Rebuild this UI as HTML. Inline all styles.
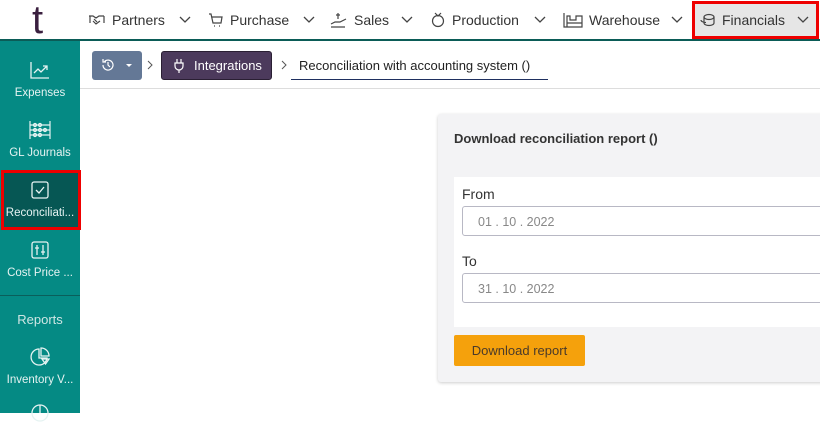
<!DOCTYPE html>
<html><head><style>
*{box-sizing:border-box;margin:0;padding:0}
body{width:820px;height:413px;overflow:hidden;font-family:"Liberation Sans",sans-serif;background:#fff;position:relative;color:#222}
.top{position:absolute;left:0;top:0;width:820px;height:41px;background:#fff;border-bottom:2px solid #0b5c57}
.logo{position:absolute;left:32px;top:2px;font-size:40px;color:#3a1f3f;font-family:"Liberation Sans",sans-serif;line-height:36px}
.nav{position:absolute;top:0;height:39px;display:flex;align-items:center;font-size:14px;color:#333}
.nav svg{margin-right:6px}
.chev{position:absolute;top:12px}
.fin{position:absolute;left:692px;top:1px;width:127px;height:38px;background:#e6e6e6;border:3px solid #e00}
.side{position:absolute;left:0;top:41px;width:80px;height:372px;background:#058a84}
.si{position:absolute;left:0;width:80px;text-align:center;color:#e6f3f2;font-size:11.5px}
.sel{position:absolute;left:1px;top:170px;width:80px;height:60px;background:#065754;border:3px solid #e00}
.crumbs{position:absolute;left:80px;top:41px;width:740px;height:48px;border-bottom:1px solid #ddd}
.card{position:absolute;left:438px;top:114px;width:390px;height:268px;background:#f3f3f5;box-shadow:0 1px 3px rgba(0,0,0,.2);border-radius:3px}
.inner{position:absolute;left:16px;top:63px;width:380px;height:150px;background:#fff}
.lbl{position:absolute;left:8px;font-size:14px;color:#333}
.inp{position:absolute;left:8px;width:380px;height:30px;border:1px solid #b8b8c4;border-radius:3px;font-size:12.5px;color:#888;padding:8px 15px}
.btn{position:absolute;left:16px;top:221px;width:131px;height:31px;background:#f5a10c;border-radius:2px;font-size:13px;color:#4a3a2a;text-align:center;line-height:31px}
</style></head><body>
<div class="top">
<div class="logo">t</div>
<div class="nav" style="left:88px"><svg width="18" height="14" viewBox="0 0 18 14" fill="none" stroke="#444" stroke-width="1.2"><path d="M1 3h4l3 2 3-2h5M2 3v7M16 3v7M5 8l3 3 4-3M6 6l3 3"/></svg>Partners</div>
<svg class="chev" style="left:178px" width="14" height="14" viewBox="0 0 14 14"><path d="M2 5l5 5 5-5" fill="none" stroke="#444" stroke-width="1.3"/></svg>
<div class="nav" style="left:208px"><svg width="16" height="16" viewBox="0 0 16 16" fill="none" stroke="#444" stroke-width="1.2"><path d="M1 2h2l2 9h8l1-6H4M6 14h1M11 14h1"/></svg>Purchase</div>
<svg class="chev" style="left:302px" width="14" height="14" viewBox="0 0 14 14"><path d="M2 5l5 5 5-5" fill="none" stroke="#444" stroke-width="1.3"/></svg>
<div class="nav" style="left:330px"><svg width="18" height="16" viewBox="0 0 18 16" fill="none" stroke="#444" stroke-width="1.2"><path d="M8 1v6M6 3h4M1 12l4-2h5l6-3M1 15h14"/></svg>Sales</div>
<svg class="chev" style="left:400px" width="14" height="14" viewBox="0 0 14 14"><path d="M2 5l5 5 5-5" fill="none" stroke="#444" stroke-width="1.3"/></svg>
<div class="nav" style="left:430px"><svg width="16" height="16" viewBox="0 0 16 16" fill="none" stroke="#444" stroke-width="1.2"><circle cx="8" cy="9" r="5.5"/><path d="M5 1l3 3 3-3"/></svg>Production</div>
<svg class="chev" style="left:533px" width="14" height="14" viewBox="0 0 14 14"><path d="M2 5l5 5 5-5" fill="none" stroke="#444" stroke-width="1.3"/></svg>
<div class="nav" style="left:563px"><svg width="20" height="16" viewBox="0 0 20 16" fill="none" stroke="#444" stroke-width="1.2"><path d="M1 1v14h18V4h-6v4H7V4H4v11M4 11h15"/></svg>Warehouse</div>
<svg class="chev" style="left:670px" width="14" height="14" viewBox="0 0 14 14"><path d="M2 5l5 5 5-5" fill="none" stroke="#444" stroke-width="1.3"/></svg>
<div class="fin"></div>
<div class="nav" style="left:700px"><svg width="16" height="14" viewBox="0 0 16 14" fill="none" stroke="#444" stroke-width="1.2"><ellipse cx="9" cy="4" rx="5" ry="2.5"/><path d="M4 4v6c0 1.4 2.2 2.5 5 2.5s5-1.1 5-2.5V4M1 7c0 1.4 2.2 2.5 5 2.5"/></svg>Financials</div>
<svg class="chev" style="left:796px" width="14" height="14" viewBox="0 0 14 14"><path d="M2 5l5 5 5-5" fill="none" stroke="#444" stroke-width="1.3"/></svg>
</div>
<div class="side">
<div class="si" style="top:20px"><svg width="20" height="18" viewBox="0 0 20 18" fill="none" stroke="#e6f3f2" stroke-width="1.3"><path d="M1 1v16h18M4 12l4-4 3 3 6-6M13 5h4v4"/></svg><div style="margin-top:5px">Expenses</div></div>
<div class="si" style="top:80px"><svg width="22" height="18" viewBox="0 0 22 18" fill="none" stroke="#e6f3f2" stroke-width="1.2"><path d="M1 0v18M21 0v18M1 4h20M1 9h20M1 14h20"/><circle cx="6" cy="4" r="1.5"/><circle cx="11" cy="4" r="1.5"/><circle cx="6" cy="9" r="1.5"/><circle cx="11" cy="9" r="1.5"/><circle cx="16" cy="9" r="1.5"/><circle cx="6" cy="14" r="1.5"/><circle cx="11" cy="14" r="1.5"/></svg><div style="margin-top:5px">GL Journals</div></div>
<div class="sel" style="top:129px"></div>
<div class="si" style="top:140px"><svg width="18" height="18" viewBox="0 0 18 18" fill="none" stroke="#e6f3f2" stroke-width="1.3"><rect x="1" y="1" width="16" height="16" rx="2"/><path d="M5 9l3 3 5-6"/></svg><div style="margin-top:5px">Reconciliati...</div></div>
<div class="si" style="top:200px"><svg width="18" height="18" viewBox="0 0 18 18" fill="none" stroke="#e6f3f2" stroke-width="1.3"><rect x="1" y="1" width="16" height="16" rx="2"/><path d="M6 4v10M12 4v10M4 7h4M10 11h4"/></svg><div style="margin-top:5px">Cost Price ...</div></div>
<div style="position:absolute;left:0;top:254px;width:80px;border-top:1px solid #0a5f5b"></div>
<div class="si" style="top:271px;font-size:13px;color:#cfe6e4">Reports</div>
<div class="si" style="top:306px"><svg width="20" height="20" viewBox="0 0 20 20" fill="none" stroke="#e6f3f2" stroke-width="1.3"><path d="M9 2a8 8 0 1 0 8 9H9z"/><path d="M11 1v8h8a8 8 0 0 0-8-8zM12 12h7l-3.5 5z"/></svg><div style="margin-top:4px">Inventory V...</div></div>
<div class="si" style="top:362px"><svg width="20" height="20" viewBox="0 0 20 20" fill="none" stroke="#e6f3f2" stroke-width="1.3"><circle cx="10" cy="10" r="8"/><path d="M10 2v8"/></svg></div>
</div>
<div class="crumbs">
<div style="position:absolute;left:12px;top:10px;width:50px;height:29px;background:#647896;border-radius:3px;color:#fff">
<svg style="position:absolute;left:9px;top:7px" width="14" height="14" viewBox="0 0 14 14" fill="none" stroke="#fff" stroke-width="1.2"><path d="M2 7a5 5 0 1 0 1.5-3.5M2 1v3h3M7 4v3l2 2"/></svg>
<div style="position:absolute;left:34px;top:13px;border:3px solid transparent;border-top:3px solid #fff"></div></div>
<svg style="position:absolute;left:66px;top:19px" width="8" height="10" viewBox="0 0 8 10"><path d="M2 1l4 4-4 4" fill="none" stroke="#555"/></svg>
<div style="position:absolute;left:81px;top:10px;width:111px;height:29px;background:#4c3a5c;border:1px solid #2a1f33;border-radius:3px;color:#fff;font-size:13px;line-height:27px;padding-left:32px">Integrations
<svg style="position:absolute;left:11px;top:6px" width="12" height="16" viewBox="0 0 12 16" fill="none" stroke="#fff" stroke-width="1.2"><path d="M4 1v4M8 1v4M2 5h8v3a4 4 0 0 1-8 0zM6 12v3"/></svg></div>
<svg style="position:absolute;left:200px;top:19px" width="8" height="10" viewBox="0 0 8 10"><path d="M2 1l4 4-4 4" fill="none" stroke="#555"/></svg>
<div style="position:absolute;left:211px;top:10px;width:257px;height:29px;border-bottom:1px solid #1f3060;font-size:13px;color:#222;line-height:29px;padding-left:8px">Reconciliation with accounting system ()</div>
</div>
<div class="card">
<div style="position:absolute;left:16px;top:17px;font-size:13px;font-weight:bold;color:#333">Download reconciliation report ()</div>
<div class="inner">
<div class="lbl" style="top:9px">From</div>
<div class="inp" style="top:29px">01 . 10 . 2022</div>
<div class="lbl" style="top:76px">To</div>
<div class="inp" style="top:96px">31 . 10 . 2022</div>
</div>
<div class="btn">Download report</div>
</div>
</body></html>
